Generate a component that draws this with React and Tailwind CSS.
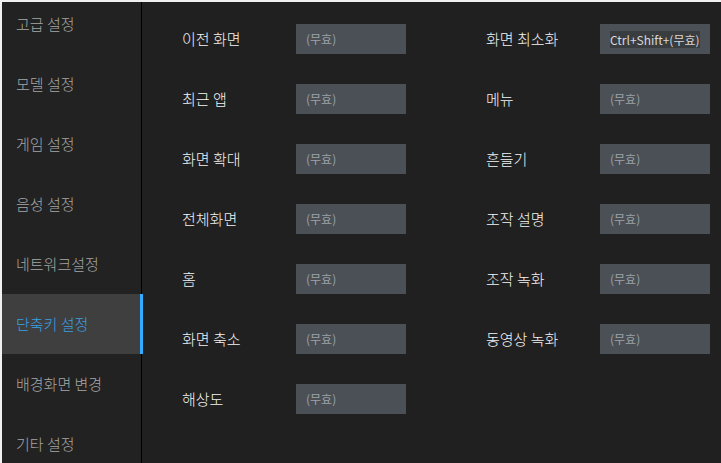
import React from "react";

const menu = [
  "고급 설정",
  "모델 설정",
  "게임 설정",
  "음성 설정",
  "네트워크설정",
  "단축키 설정",
  "배경화면 변경",
  "기타 설정",
];

const rows = [
  ["이전 화면", "(무효)", "화면 최소화", "Ctrl+Shift+(무효)"],
  ["최근 앱", "(무효)", "메뉴", "(무효)"],
  ["화면 확대", "(무효)", "흔들기", "(무효)"],
  ["전체화면", "(무효)", "조작 설명", "(무효)"],
  ["홈", "(무효)", "조작 녹화", "(무효)"],
  ["화면 축소", "(무효)", "동영상 녹화", "(무효)"],
  ["해상도", "(무효)", null, null],
];

function HotkeyField({ label, value, selected }) {
  return (
    <div className="flex items-center w-[304px]">
      <span className="w-[114px] text-[15px] font-light text-[#f4f4f4]">{label}</span>
      <div className="w-[110px] h-[30px] bg-[#4a5056] flex items-center pl-[10px] text-[12px] text-[#9ca2a7] whitespace-nowrap overflow-hidden">
        {selected ? (
          <span className="bg-[#3a3d40] text-[#d8d8d8] leading-[17px]">{value}</span>
        ) : (
          value
        )}
      </div>
    </div>
  );
}

export default function App() {
  const active = 5;

  return (
    <div
      className="w-[721px] h-[463px] flex border-t-2 border-l-2 border-[#f0f0f0] bg-[#202020] overflow-hidden"
      style={{ fontFamily: '"Noto Sans CJK KR", "Noto Sans", sans-serif' }}
    >
      <aside className="w-[140px] shrink-0 bg-[#222222] border-r border-black">
        <ul className="-mt-[8px]">
          {menu.map((item, i) => (
            <li
              key={item}
              className={
                "relative h-[60px] flex items-center pl-[14px] text-[15px] font-light " +
                (i === active ? "bg-[#3f3f3f] text-[#3a9fe2]" : "text-[#a6a6a6]")
              }
            >
              {item}
              {i === active && (
                <span className="absolute top-0 bottom-0 -right-[2px] w-[3px] bg-[#33acff]" />
              )}
            </li>
          ))}
        </ul>
      </aside>

      <main className="flex-1 pt-[7px] pl-[40px]">
        {rows.map(([l1, v1, l2, v2]) => (
          <div key={l1} className="h-[60px] flex items-center">
            <HotkeyField label={l1} value={v1} />
            {l2 && <HotkeyField label={l2} value={v2} selected={v2.startsWith("Ctrl")} />}
          </div>
        ))}
      </main>
    </div>
  );
}
